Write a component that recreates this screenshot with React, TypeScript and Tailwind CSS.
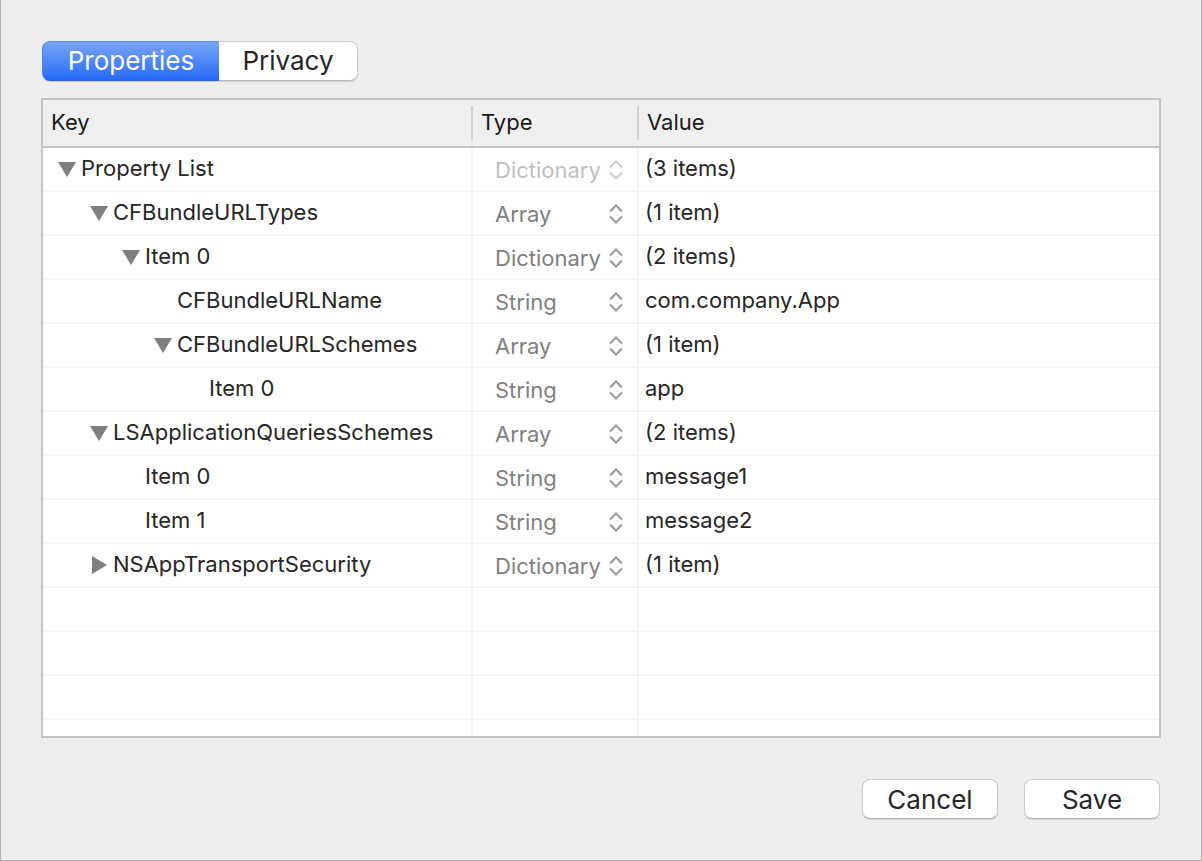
import { useState } from "react";

type ValueType = "Dictionary" | "Array" | "String";

interface Entry {
  key: string;
  indent: string;
  type: ValueType;
  value: string;
  expanded?: boolean;
  locked?: boolean;
}

const LEVELS = ["pl-[15px]", "pl-[47px]", "pl-[79px]", "pl-[111px]", "pl-[143px]"];

const ENTRIES: Entry[] = [
  { key: "Property List", indent: LEVELS[0], type: "Dictionary", value: "(3 items)", expanded: true, locked: true },
  { key: "CFBundleURLTypes", indent: LEVELS[1], type: "Array", value: "(1 item)", expanded: true },
  { key: "Item 0", indent: LEVELS[2], type: "Dictionary", value: "(2 items)", expanded: true },
  { key: "CFBundleURLName", indent: LEVELS[3], type: "String", value: "com.company.App" },
  { key: "CFBundleURLSchemes", indent: LEVELS[3], type: "Array", value: "(1 item)", expanded: true },
  { key: "Item 0", indent: LEVELS[4], type: "String", value: "app" },
  { key: "LSApplicationQueriesSchemes", indent: LEVELS[1], type: "Array", value: "(2 items)", expanded: true },
  { key: "Item 0", indent: LEVELS[2], type: "String", value: "message1" },
  { key: "Item 1", indent: LEVELS[2], type: "String", value: "message2" },
  { key: "NSAppTransportSecurity", indent: LEVELS[1], type: "Dictionary", value: "(1 item)", expanded: false },
];

const EMPTY_ROWS = ["h-11", "h-11", "h-11", "h-4"];
const TYPES: ValueType[] = ["Dictionary", "Array", "String"];

function Disclosure({ expanded, label }: { expanded: boolean; label: string }) {
  return (
    <button type="button" aria-expanded={expanded} aria-label={label} className="block h-[18px] w-[18px]">
      <svg viewBox="0 0 18 18" className="h-[18px] w-[18px] fill-[#7f7f7f]" aria-hidden="true">
        {expanded ? <path d="M0 2h18L9 17z" /> : <path d="M2 0v18l15-9z" />}
      </svg>
    </button>
  );
}

function TypeSelect({ entry }: { entry: Entry }) {
  return (
    <div className={`grid items-center pt-1 ${entry.locked ? "text-[#c0c0c0]" : "text-[#808080]"}`}>
      <select
        aria-label={`Type of ${entry.key}`}
        defaultValue={entry.type}
        disabled={entry.locked}
        className="col-start-1 row-start-1 h-7 w-full appearance-none bg-transparent pb-0.5 pl-[22px] leading-[26px] opacity-100 outline-none"
      >
        {TYPES.map((t) => (
          <option key={t}>{t}</option>
        ))}
      </select>
      <svg
        viewBox="0 0 14 22"
        className={`pointer-events-none col-start-1 row-start-1 mr-[14px] h-[22px] w-[14px] justify-self-end fill-none stroke-2 ${
          entry.locked ? "stroke-[#cccccc]" : "stroke-[#999999]"
        }`}
        aria-hidden="true"
      >
        <path d="M1 7.5 7 1.5l6 6M1 12.5l6 6 6-6" />
      </svg>
    </div>
  );
}

function PushButton({ children }: { children: string }) {
  return (
    <button
      type="button"
      className="h-10 w-34 rounded-lg border border-[#cbcbcb] border-b-[#b4b4b4] bg-white pt-0.5 text-[26px] leading-9 text-[#262626] shadow-[0_1px_1px_#00000020]"
    >
      {children}
    </button>
  );
}

export default function App() {
  const [tab, setTab] = useState("Properties");
  const tabClass = (name: string) =>
    tab === name
      ? "border-[#4a82ef] border-t-[#5b8fee] border-b-[#2563e6] bg-linear-to-b from-[#76a4f6] to-[#2569f7] text-white"
      : "border-[#cbcbcb] border-b-[#b4b4b4] bg-white text-[#262626]";

  return (
    <main className="flex min-h-screen flex-col border-x border-b border-[#b0b0b0] bg-[#eeeeee] px-10 pt-[41px] pb-10 font-['Inter',sans-serif] text-[#262626]">
      <div role="tablist" className="ml-px flex self-start rounded-lg text-[26px] leading-9 shadow-[0_1px_1px_#00000020]">
        <button type="button" role="tab" aria-selected={tab === "Properties"} onClick={() => setTab("Properties")} className={`h-10 w-[177px] rounded-l-lg border-y border-l ${tabClass("Properties")}`}>
          Properties
        </button>
        <button type="button" role="tab" aria-selected={tab === "Privacy"} onClick={() => setTab("Privacy")} className={`h-10 w-[139px] rounded-r-lg border-y border-r ${tabClass("Privacy")}`}>
          Privacy
        </button>
      </div>

      <div className="mt-[17px] border-2 border-[#c4c4c4] bg-white">
        <table className="w-full table-fixed border-separate border-spacing-0 text-left text-[22px] leading-[26px]">
          <colgroup>
            <col className="w-[430px]" />
            <col className="w-[166px]" />
            <col />
          </colgroup>
          <thead>
            <tr className="h-12 bg-[#efefef]">
              <th className="border-b-2 border-[#c4c4c4] font-normal">
                <div className="border-r-2 border-[#d4d4d4] pt-[3px] pb-[5px] pl-2 text-[#1a1a1a]">Key</div>
              </th>
              <th className="border-b-2 border-[#c4c4c4] font-normal">
                <div className="border-r-2 border-[#d4d4d4] pt-[3px] pb-[5px] pl-2 text-[#1a1a1a]">Type</div>
              </th>
              <th className="border-b-2 border-[#c4c4c4] font-normal">
                <div className="pt-[3px] pb-[5px] pl-2 text-[#1a1a1a]">Value</div>
              </th>
            </tr>
          </thead>
          <tbody>
            {ENTRIES.map((entry, i) => (
              <tr key={i} className="h-11">
                <td className="border-r-2 border-b-2 border-[#f4f4f4]">
                  <div className={`flex items-center gap-[5px] ${entry.indent}`}>
                    <span className="w-[18px] shrink-0">
                      {entry.expanded !== undefined && <Disclosure expanded={entry.expanded} label={`Toggle ${entry.key}`} />}
                    </span>
                    <span className="pb-0.5 whitespace-nowrap">{entry.key}</span>
                  </div>
                </td>
                <td className="border-r-2 border-b-2 border-[#f4f4f4]">
                  <TypeSelect entry={entry} />
                </td>
                <td className="border-b-2 border-[#f4f4f4] pb-0.5 pl-[6px]">{entry.value}</td>
              </tr>
            ))}
            {EMPTY_ROWS.map((height, i) => {
              const line = i < EMPTY_ROWS.length - 1 ? "border-b-2" : "";
              return (
                <tr key={i} className={height}>
                  <td className={`border-r-2 border-[#f4f4f4] ${line}`} />
                  <td className={`border-r-2 border-[#f4f4f4] ${line}`} />
                  <td className={`border-[#f4f4f4] ${line}`} />
                </tr>
              );
            })}
          </tbody>
        </table>
      </div>

      <div className="mt-[41px] mr-px flex justify-end gap-[26px]">
        <PushButton>Cancel</PushButton>
        <PushButton>Save</PushButton>
      </div>
    </main>
  );
}
